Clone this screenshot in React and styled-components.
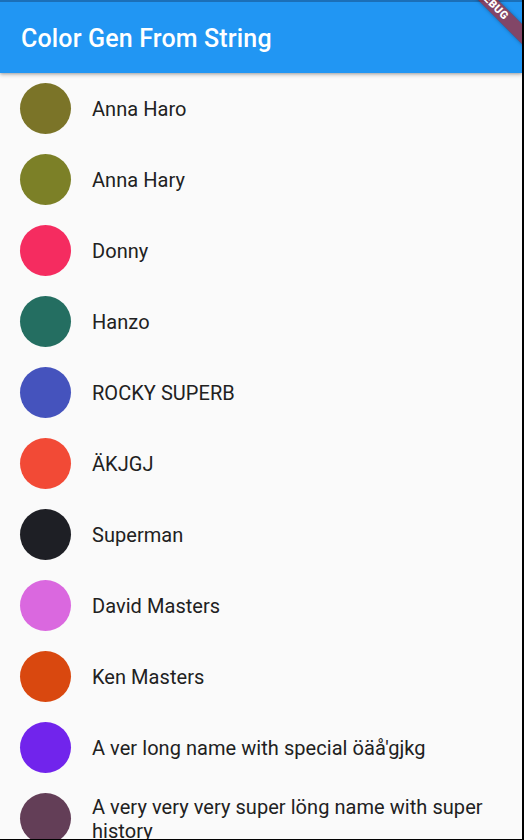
import React from 'react'
import styled, { createGlobalStyle } from 'styled-components'

const GlobalStyle = createGlobalStyle`
    html, body {
        margin: 0;
        padding: 0;
        background: #000;
    }
    body {
        font-family: Roboto, "Noto Sans", "Liberation Sans", sans-serif;
    }
`

const people = [
    { name: 'Anna Haro', color: '#7b7428' },
    { name: 'Anna Hary', color: '#7c8027' },
    { name: 'Donny', color: '#f52c60' },
    { name: 'Hanzo', color: '#246e61' },
    { name: 'ROCKY SUPERB', color: '#4553bd' },
    { name: 'ÄKJGJ', color: '#f24a36' },
    { name: 'Superman', color: '#1e1f25' },
    { name: 'David Masters', color: '#da68df' },
    { name: 'Ken Masters', color: '#d9480f' },
    { name: "A ver long name with special öäå'gjkg", color: '#7124ec' },
    { name: 'A very very very super löng name with super history', color: '#633e57' },
]

function App() {
    return (
        <>
            <GlobalStyle />
            <Screen>
                <AppBar>
                    <Title>Color Gen From String</Title>
                </AppBar>

                <List>
                    {people.map((p) => (
                        <Tile key={p.name}>
                            <Avatar color={p.color} />
                            <Name>{p.name}</Name>
                        </Tile>
                    ))}
                </List>

                <DebugBanner>DEBUG</DebugBanner>
            </Screen>
        </>
    )
}

export default App

const Screen = styled.div`
    position: relative;
    width: 522px;
    height: 839px;
    overflow: hidden;
    background: #fafafa;
    display: flex;
    flex-direction: column;
`

const AppBar = styled.header`
    position: relative;
    z-index: 2;
    flex: none;
    height: 71px;
    border-top: 2px solid #1b6fb8;
    background: #2196f3;
    display: flex;
    align-items: center;
    padding-left: 21px;
    box-shadow: 0 2px 4px rgba(0, 0, 0, 0.22), 0 1px 2px rgba(0, 0, 0, 0.14);
`

const Title = styled.h1`
    margin: 0;
    margin-top: 2px;
    color: #fff;
    font-size: 25px;
    font-weight: 500;
    letter-spacing: 0.15px;
`

const List = styled.ul`
    margin: 0;
    padding: 0;
    list-style: none;
`

const Tile = styled.li`
    min-height: 71px;
    display: flex;
    align-items: center;
    gap: 21px;
    padding: 0 20px;
    box-sizing: border-box;
`

const Avatar = styled.span`
    flex: none;
    width: 51px;
    height: 51px;
    border-radius: 50%;
    background: ${(p) => p.color};
`

const Name = styled.span`
    font-size: 20px;
    line-height: 24px;
    color: #212121;
    letter-spacing: 0.05px;
`

const DebugBanner = styled.div`
    position: absolute;
    z-index: 3;
    left: 413px;
    top: -2px;
    width: 160px;
    height: 14px;
    transform: rotate(45deg);
    background: rgba(183, 28, 28, 0.65);
    box-shadow: 0 0 4px rgba(0, 0, 0, 0.35);
    color: #fff;
    font-size: 11px;
    font-weight: 900;
    line-height: 14px;
    text-align: center;
    letter-spacing: 0.5px;
`
